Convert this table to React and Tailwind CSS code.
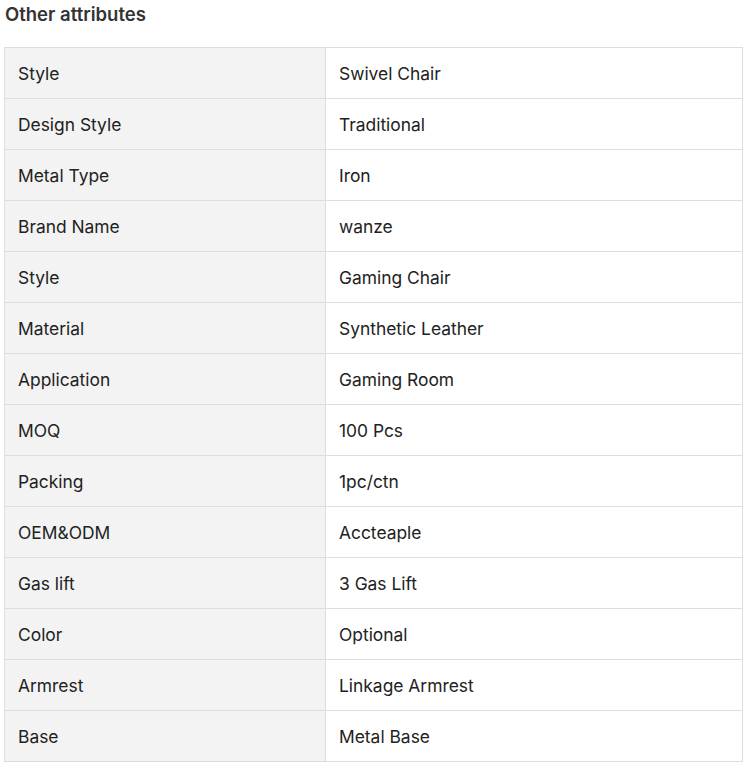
import React from 'react';

const rows = [
  ['Style', 'Swivel Chair'],
  ['Design Style', 'Traditional'],
  ['Metal Type', 'Iron'],
  ['Brand Name', 'wanze'],
  ['Style', 'Gaming Chair'],
  ['Material', 'Synthetic Leather'],
  ['Application', 'Gaming Room'],
  ['MOQ', '100 Pcs'],
  ['Packing', '1pc/ctn'],
  ['OEM&ODM', 'Accteaple'],
  ['Gas lift', '3 Gas Lift'],
  ['Color', 'Optional'],
  ['Armrest', 'Linkage Armrest'],
  ['Base', 'Metal Base'],
];

const App = () => {
  return (
    <div className="bg-white min-h-screen px-[4px] pt-[3px] font-['Inter',sans-serif] text-[#222]">
      <h3 className="text-[18.5px] leading-[22px] font-semibold text-[#333] pl-[1px]">Other attributes</h3>
      <table className="mt-[22px] w-[739px] border-collapse table-fixed">
        <tbody>
          {rows.map(([label, value], i) => (
            <tr key={i} className="h-[51px]">
              <td className="w-[321px] border border-[#dddddd] bg-[#f3f3f3] px-[13px] pt-[2px] text-[17.4px] align-middle">{label}</td>
              <td className="border border-[#dddddd] px-[13px] pt-[2px] text-[17.4px] align-middle">{value}</td>
            </tr>
          ))}
        </tbody>
      </table>
    </div>
  );
};

export default App;
